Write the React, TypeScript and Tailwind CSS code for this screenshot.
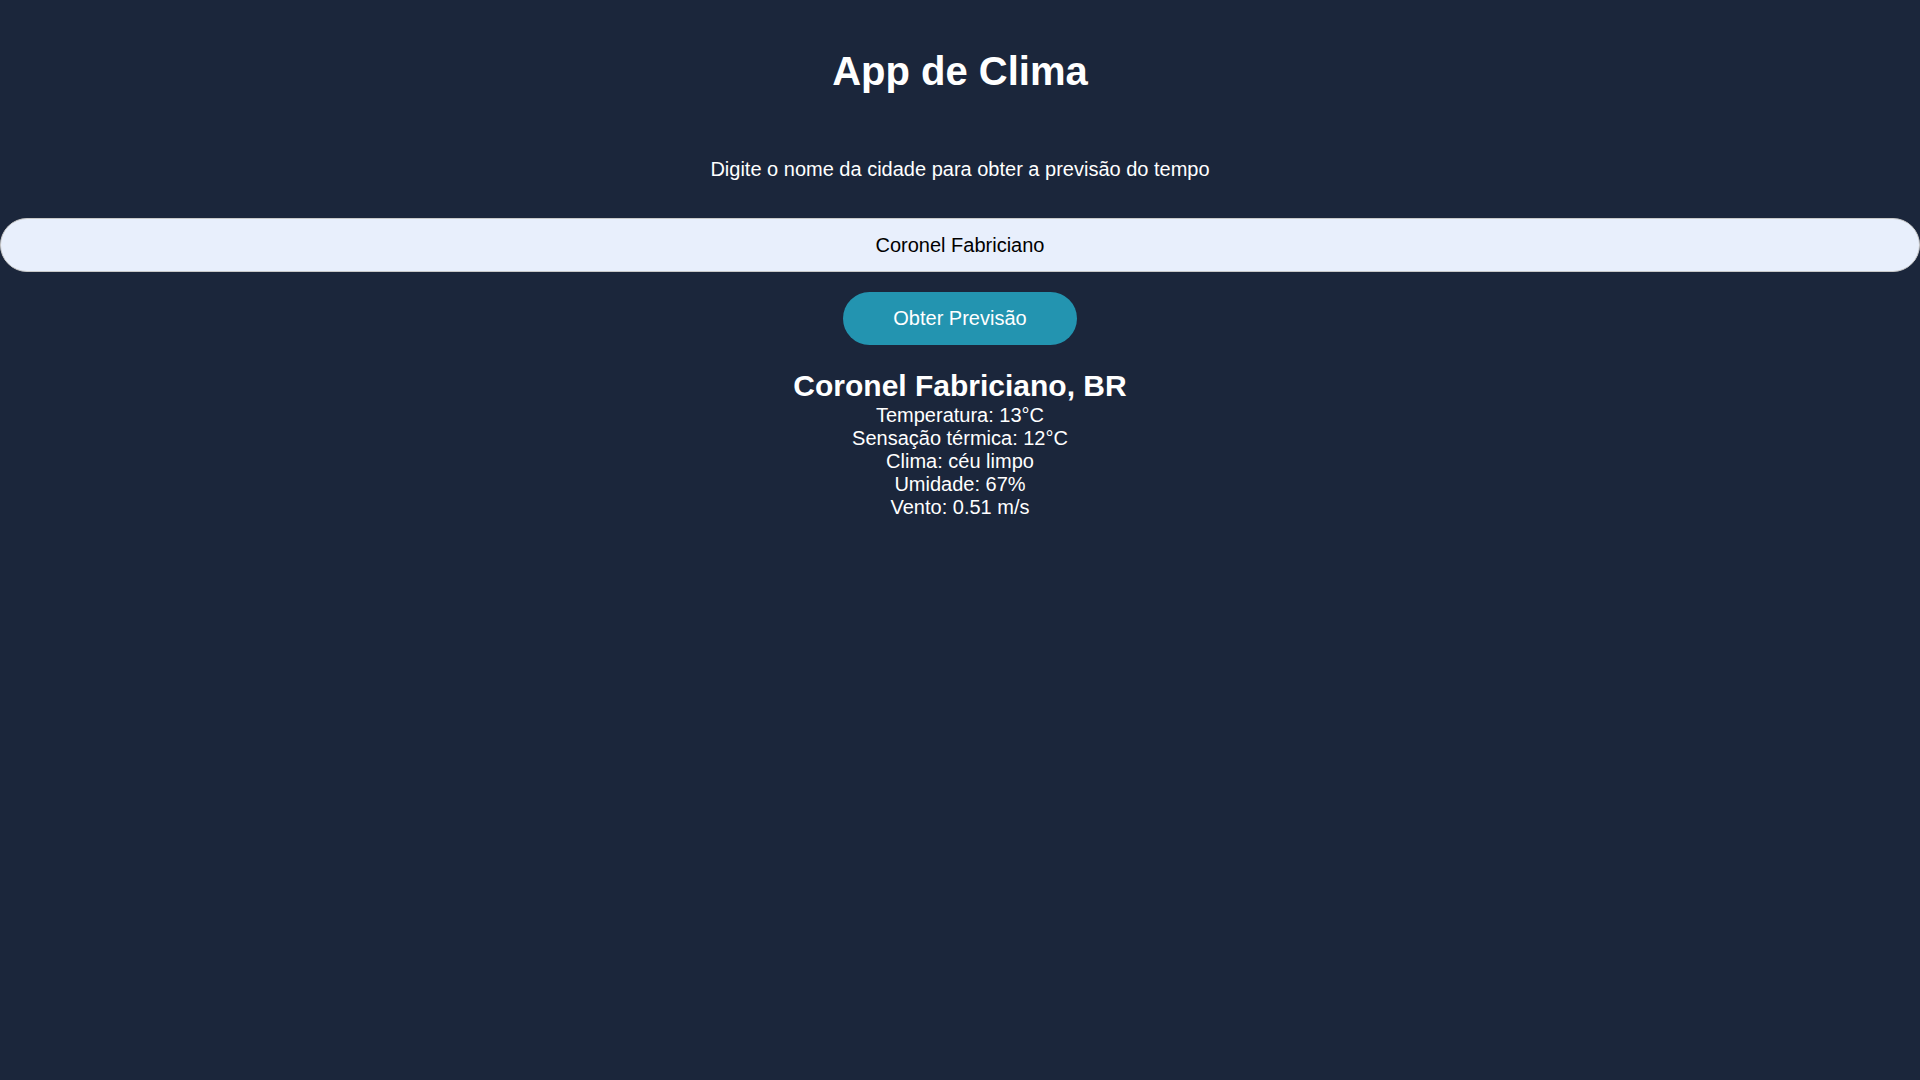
import React, { useState } from 'react';

type WeatherInfo = {
  readonly label: string;
  readonly value: string;
};

const details: WeatherInfo[] = [
  { label: 'Temperatura', value: '13°C' },
  { label: 'Sensação térmica', value: '12°C' },
  { label: 'Clima', value: 'céu limpo' },
  { label: 'Umidade', value: '67%' },
  { label: 'Vento', value: '0.51 m/s' },
];

const App: React.FunctionComponent = () => {
  const [city, setCity] = useState('Coronel Fabriciano');

  return (
    <div className="min-h-screen bg-[#1b263b] text-white font-['Liberation_Sans',Arial,sans-serif] flex flex-col items-center">
      <h1 className="mt-[49px] text-[40px] font-bold leading-[normal]">App de Clima</h1>

      <p className="mt-[64px] text-[20px] leading-[normal]">
        Digite o nome da cidade para obter a previsão do tempo
      </p>

      <input
        type="text"
        value={city}
        onChange={(e) => setCity(e.target.value)}
        className="mt-[37px] w-full h-[54px] rounded-full border border-[#c8c8c8] bg-[#e8effc] text-center text-[20px] text-black outline-none"
      />

      <button className="mt-[20px] w-[234px] h-[53px] rounded-full bg-[#2394b0] text-[20px] leading-[normal] text-white">
        Obter Previsão
      </button>

      <div className="mt-[24px] flex flex-col items-center">
        <h2 className="mb-[1px] text-[30px] font-bold leading-[normal]">Coronel Fabriciano, BR</h2>
        {details.map((item) => (
          <p key={item.label} className="text-[20px] leading-[normal]">
            {item.label}: {item.value}
          </p>
        ))}
      </div>
    </div>
  );
};

export default App;
